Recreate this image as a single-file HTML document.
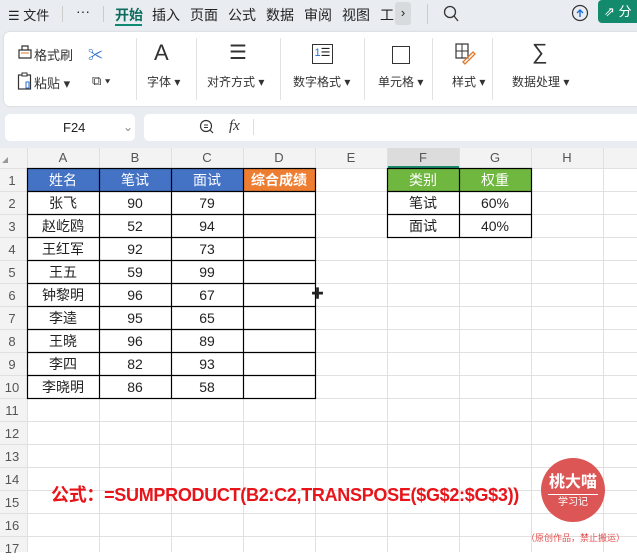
<!DOCTYPE html>
<html><head><meta charset="utf-8"><style>
*{margin:0;padding:0;box-sizing:border-box}
body{width:637px;height:552px;overflow:hidden;background:#fff;font-family:"Liberation Sans","Noto Sans CJK SC",sans-serif;position:relative;color:#222}
.abs{position:absolute;white-space:nowrap}
.top{left:0;top:0;width:637px;height:148px;background:#e9edf1}
.tab{top:5px;font-size:14px;color:#222}
.card{left:4px;top:32px;width:640px;height:74px;background:#fff;border-radius:6px;box-shadow:0 0 2px rgba(0,0,0,.15)}
.lbl{font-size:12px;color:#333;top:73px}
.sep{top:38px;width:1px;height:62px;background:#e2e2e2}
.c{position:absolute;text-align:center;font-size:14px;line-height:23px}
.hdr{background:#f3f3f3;color:#555;font-size:13px}
</style></head><body>
<div class="abs top"></div>
<div class="abs tab" style="left:8px;font-size:13px">☰ 文件</div>
<div class="abs" style="left:62px;top:6px;width:1px;height:16px;background:#ccc"></div>
<div class="abs tab" style="left:76px;top:3px">···</div>
<div class="abs" style="left:103px;top:6px;width:1px;height:16px;background:#ccc"></div>
<div class="abs tab" style="left:115px;font-weight:bold;color:#0d6b5e">开始</div>
<div class="abs" style="left:115px;top:24px;width:27px;height:2px;background:#0d8a74"></div>
<div class="abs tab" style="left:152px">插入</div>
<div class="abs tab" style="left:190px">页面</div>
<div class="abs tab" style="left:228px">公式</div>
<div class="abs tab" style="left:266px">数据</div>
<div class="abs tab" style="left:304px">审阅</div>
<div class="abs tab" style="left:342px">视图</div>
<div class="abs tab" style="left:380px;width:14px;overflow:hidden">工具</div>
<div class="abs" style="left:395px;top:2px;width:16px;height:23px;background:#d8dbde;border-radius:3px;font-size:13px;text-align:center;line-height:22px">›</div>
<div class="abs" style="left:427px;top:4px;width:1px;height:20px;background:#ccc"></div>
<svg class="abs" style="left:443px;top:5px" width="16" height="18"><circle cx="7" cy="7" r="5.5" fill="none" stroke="#333" stroke-width="1.3"/><line x1="11" y1="11" x2="15" y2="16" stroke="#333" stroke-width="1.3"/></svg>
<svg class="abs" style="left:571px;top:4px" width="18" height="18"><circle cx="9" cy="9" r="7.5" fill="none" stroke="#333" stroke-width="1.2"/><path d="M9 13V6M6 9l3-3 3 3" stroke="#1a6fd6" stroke-width="1.4" fill="none"/></svg>
<div class="abs" style="left:598px;top:0;width:45px;height:23px;background:#138a6c;border-radius:4px;color:#fff;font-size:13px;line-height:23px;padding-left:6px">⇗ 分</div>
<div class="abs card"></div>
<svg class="abs" style="left:17px;top:44px" width="16" height="16"><path d="M2 6h12v8H2zM5 6V2h6v4" fill="none" stroke="#333" stroke-width="1.2"/><line x1="4" y1="9" x2="12" y2="9" stroke="#e0782a"/></svg>
<div class="abs" style="left:34px;top:45px;font-size:13px;color:#333">格式刷</div>
<div class="abs" style="left:88px;top:44px;font-size:15px;color:#2a6fcf">✂</div>
<svg class="abs" style="left:17px;top:72px" width="16" height="18"><rect x="1.5" y="3" width="12" height="14" fill="none" stroke="#333" stroke-width="1.2"/><rect x="5" y="1" width="5" height="3" fill="#fff" stroke="#333"/><rect x="9" y="10" width="3" height="6" fill="none" stroke="#2a6fcf"/></svg>
<div class="abs" style="left:34px;top:73px;font-size:13px;color:#333">粘贴 ▾</div>
<div class="abs" style="left:92px;top:73px;font-size:13px;color:#333">⧉ ▾</div>
<div class="abs sep" style="left:136px"></div>
<div class="abs" style="left:154px;top:40px;font-size:22px;color:#333;font-weight:300">A</div>
<div class="abs lbl" style="left:147px">字体 ▾</div>
<div class="abs sep" style="left:196px"></div>
<div class="abs" style="left:229px;top:40px;font-size:20px;color:#333">☰</div>
<div class="abs lbl" style="left:207px">对齐方式 ▾</div>
<div class="abs sep" style="left:280px"></div>
<div class="abs" style="left:312px;top:44px;width:21px;height:20px;border:1.5px solid #333;font-size:11px;line-height:16px;text-align:center"><span style="color:#2a6fcf">1</span>☰</div>
<div class="abs lbl" style="left:293px">数字格式 ▾</div>
<div class="abs sep" style="left:364px"></div>
<div class="abs" style="left:392px;top:46px;width:18px;height:18px;border:1.5px solid #333"></div>
<div class="abs lbl" style="left:378px">单元格 ▾</div>
<div class="abs sep" style="left:432px"></div>
<svg class="abs" style="left:455px;top:43px" width="22" height="22"><rect x="1" y="1" width="12" height="14" fill="none" stroke="#333" stroke-width="1.2"/><line x1="1" y1="8" x2="13" y2="8" stroke="#333"/><line x1="7" y1="1" x2="7" y2="15" stroke="#333"/><path d="M8 19l10-10 2 2-10 10z" fill="none" stroke="#e0782a" stroke-width="1.3"/></svg>
<div class="abs lbl" style="left:452px">样式 ▾</div>
<div class="abs sep" style="left:492px"></div>
<div class="abs" style="left:532px;top:39px;font-size:22px;color:#333">∑</div>
<div class="abs lbl" style="left:512px">数据处理 ▾</div>
<div class="abs" style="left:5px;top:114px;width:130px;height:27px;background:#fff;border-radius:5px;font-size:13px;line-height:27px;padding-left:58px">F24<span style="position:absolute;left:118px;color:#888;font-size:12px">⌄</span></div>
<div class="abs" style="left:144px;top:114px;width:500px;height:27px;background:#fff;border-radius:5px"></div>
<svg class="abs" style="left:199px;top:119px" width="16" height="16"><circle cx="7" cy="7" r="5.5" fill="none" stroke="#333" stroke-width="1.2"/><line x1="11" y1="11" x2="14" y2="14" stroke="#333" stroke-width="1.2"/><line x1="5" y1="6" x2="9" y2="6" stroke="#333"/><line x1="5" y1="8.5" x2="9" y2="8.5" stroke="#333"/></svg>
<div class="abs" style="left:229px;top:118px;font-size:15px;font-style:italic;font-family:'Liberation Serif',serif;color:#333">fx</div>
<div class="abs" style="left:253px;top:119px;width:1px;height:16px;background:#ddd"></div>

<svg class="abs" style="left:0;top:148px" width="637" height="404">
<rect x="0" y="0" width="637" height="20" fill="#f3f3f3"/>
<rect x="0" y="0" width="27" height="404" fill="#f3f3f3"/>
<rect x="387" y="0" width="72" height="20" fill="#dcdcdc"/>
<line x1="387" y1="19" x2="459" y2="19" stroke="#1b8a6b" stroke-width="2"/>
<g stroke="#e0e0e0" stroke-width="1">
<line x1="27.5" y1="0" x2="27.5" y2="404"/><line x1="99.5" y1="0" x2="99.5" y2="404"/><line x1="171.5" y1="0" x2="171.5" y2="404"/><line x1="243.5" y1="0" x2="243.5" y2="404"/><line x1="315.5" y1="0" x2="315.5" y2="404"/><line x1="387.5" y1="0" x2="387.5" y2="404"/><line x1="459.5" y1="0" x2="459.5" y2="404"/><line x1="531.5" y1="0" x2="531.5" y2="404"/><line x1="603.5" y1="0" x2="603.5" y2="404"/>
<line x1="0" y1="20.5" x2="637" y2="20.5"/><line x1="0" y1="43.5" x2="637" y2="43.5"/><line x1="0" y1="66.5" x2="637" y2="66.5"/><line x1="0" y1="89.5" x2="637" y2="89.5"/><line x1="0" y1="112.5" x2="637" y2="112.5"/><line x1="0" y1="135.5" x2="637" y2="135.5"/><line x1="0" y1="158.5" x2="637" y2="158.5"/><line x1="0" y1="181.5" x2="637" y2="181.5"/><line x1="0" y1="204.5" x2="637" y2="204.5"/><line x1="0" y1="227.5" x2="637" y2="227.5"/><line x1="0" y1="250.5" x2="637" y2="250.5"/><line x1="0" y1="273.5" x2="637" y2="273.5"/><line x1="0" y1="296.5" x2="637" y2="296.5"/><line x1="0" y1="319.5" x2="637" y2="319.5"/><line x1="0" y1="342.5" x2="637" y2="342.5"/><line x1="0" y1="365.5" x2="637" y2="365.5"/><line x1="0" y1="388.5" x2="637" y2="388.5"/>
</g>
<rect x="27" y="21" width="216" height="22" fill="#4472c4"/>
<rect x="243" y="21" width="72" height="22" fill="#ed7d31"/>
<rect x="387" y="21" width="144" height="22" fill="#70b740"/>
<g stroke="#000" stroke-width="1.2" fill="none">
<rect x="27.5" y="20.5" width="288" height="230"/>
<line x1="99.5" y1="20" x2="99.5" y2="251"/><line x1="171.5" y1="20" x2="171.5" y2="251"/><line x1="243.5" y1="20" x2="243.5" y2="251"/>
<line x1="27" y1="43.5" x2="316" y2="43.5"/><line x1="27" y1="66.5" x2="316" y2="66.5"/><line x1="27" y1="89.5" x2="316" y2="89.5"/><line x1="27" y1="112.5" x2="316" y2="112.5"/><line x1="27" y1="135.5" x2="316" y2="135.5"/><line x1="27" y1="158.5" x2="316" y2="158.5"/><line x1="27" y1="181.5" x2="316" y2="181.5"/><line x1="27" y1="204.5" x2="316" y2="204.5"/><line x1="27" y1="227.5" x2="316" y2="227.5"/>
<rect x="387.5" y="20.5" width="144" height="69"/><line x1="459.5" y1="20" x2="459.5" y2="90"/><line x1="387" y1="43.5" x2="532" y2="43.5"/><line x1="387" y1="66.5" x2="532" y2="66.5"/>
</g>
<path d="M2 15l6-6v6z" fill="#999"/>
</svg>
<div id="g"></div>
<script>
var cols=["A","B","C","D","E","F","G","H"],h='';
cols.forEach(function(c,i){h+='<div class="c hdr" style="left:'+(27+i*72)+'px;top:148px;width:72px;line-height:20px;background:transparent">'+c+'</div>'});
for(var r=1;r<=17;r++){h+='<div class="c hdr" style="left:0;top:'+(146+r*23)+'px;width:24px;background:transparent">'+r+'</div>'}
var d=[["姓名","笔试","面试","综合成绩"],["张飞",90,79],["赵屹鸥",52,94],["王红军",92,73],["王五",59,99],["钟黎明",96,67],["李逵",95,65],["王晓",96,89],["李四",82,93],["李晓明",86,58]];
d.forEach(function(row,i){row.forEach(function(v,j){var s=i==0?(j==3?'color:#fff;font-weight:bold':'color:#fff'):'';h+='<div class="c" style="left:'+(27+j*72)+'px;top:'+(169+i*23)+'px;width:72px;'+s+'">'+v+'</div>'})});
[["类别","权重"],["笔试","60%"],["面试","40%"]].forEach(function(row,i){row.forEach(function(v,j){h+='<div class="c" style="left:'+(387+j*72)+'px;top:'+(169+i*23)+'px;width:72px;'+(i==0?'color:#fff':'')+'">'+v+'</div>'})});
document.getElementById('g').innerHTML=h;
</script>
<div class="abs" style="left:311px;top:283px;font-size:13px;font-weight:bold">✚</div>
<div class="abs" style="left:51px;top:481px;font-size:18px;font-weight:bold;color:#e8141a;letter-spacing:-0.3px">公式：=SUMPRODUCT(B2:C2,TRANSPOSE($G$2:$G$3))</div>
<div class="abs" style="left:541px;top:458px;width:64px;height:64px;border-radius:50%;background:#dd5656;color:#fff;text-align:center">
<div style="font-size:16px;font-weight:bold;margin-top:16px;line-height:18px">桃大喵</div>
<div style="width:50px;height:1px;background:#fff;margin:2px auto"></div>
<div style="font-size:10px;line-height:12px">学习记</div></div>
<div class="abs" style="left:526px;top:531px;font-size:9px;color:#e05050">（原创作品，禁止搬运）</div>
</body></html>
